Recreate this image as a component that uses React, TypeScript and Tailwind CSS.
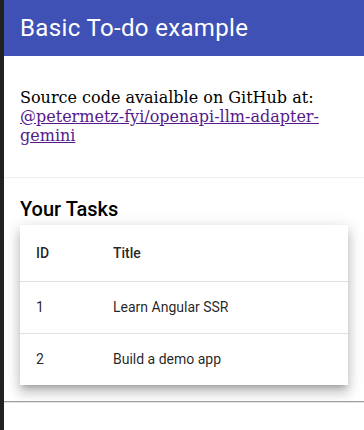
import React from 'react';

type Task = { id: number; title: string };

const tasks: Task[] = [
  { id: 1, title: 'Learn Angular SSR' },
  { id: 2, title: 'Build a demo app' },
];

const roboto = 'font-[Roboto,"Liberation_Sans",sans-serif]';

const TaskTable: React.FC<{ rows: Task[] }> = ({ rows }) => (
  <div className="bg-white shadow-[0_5px_5px_-3px_rgba(0,0,0,0.2),0_8px_10px_1px_rgba(0,0,0,0.14),0_3px_14px_2px_rgba(0,0,0,0.12)]">
    <table className={`w-full border-collapse text-left text-sm text-black/[0.87] ${roboto}`}>
      <thead>
        <tr className="h-14 border-b border-[#e0e0e0]">
          <th className="w-[93px] pl-4 font-medium">ID</th>
          <th className="font-medium">Title</th>
        </tr>
      </thead>
      <tbody>
        {rows.map((t, i) => (
          <tr key={t.id} className={`h-[52px] ${i < rows.length - 1 ? 'border-b border-[#e0e0e0]' : ''}`}>
            <td className="pl-4">{t.id}</td>
            <td>{t.title}</td>
          </tr>
        ))}
      </tbody>
    </table>
  </div>
);

export default function App() {
  return (
    <div className="flex min-h-[430px] w-full bg-[#212121]">
      <div className="ml-1 flex-1 bg-white">
        {/* toolbar */}
        <header className={`flex h-14 items-center bg-[#3f51b5] px-4 text-white ${roboto}`}>
          <h1 className="text-2xl leading-8 tracking-[0.35px]">Basic To-do example</h1>
        </header>

        <section className="border-b border-[#f0f0f0] p-4">
          <p className='my-4 font-["DejaVu_Serif",serif] text-base leading-[normal] text-black'>
            Source code avaialble on GitHub at:{' '}
            <a href="#" className="text-[#551a8b] underline">
              @petermetz-fyi/openapi-llm-adapter-gemini
            </a>
          </p>
        </section>

        <section className="p-4 pt-[15px]">
          <h2 className={`text-xl leading-8 font-medium text-black ${roboto}`}>Your Tasks</h2>
          <TaskTable rows={tasks} />
        </section>

        <div className="border-t border-b border-t-[#a0a0a0] border-b-[#e4e4e4]" />
      </div>
    </div>
  );
}
